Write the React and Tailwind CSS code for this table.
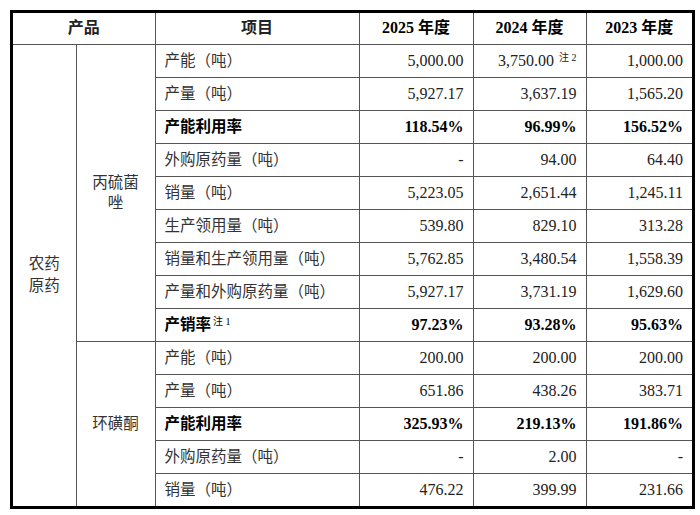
import React from "react";

const font = { fontFamily: '"Liberation Serif", "Noto Sans CJK SC", serif' };

const rowsA = [
  { label: "产能（吨）", v: ["5,000.00", "3,750.00", "1,000.00"], note2: true },
  { label: "产量（吨）", v: ["5,927.17", "3,637.19", "1,565.20"] },
  { label: "产能利用率", v: ["118.54%", "96.99%", "156.52%"], bold: true },
  { label: "外购原药量（吨）", v: ["-", "94.00", "64.40"] },
  { label: "销量（吨）", v: ["5,223.05", "2,651.44", "1,245.11"] },
  { label: "生产领用量（吨）", v: ["539.80", "829.10", "313.28"] },
  { label: "销量和生产领用量（吨）", v: ["5,762.85", "3,480.54", "1,558.39"] },
  { label: "产量和外购原药量（吨）", v: ["5,927.17", "3,731.19", "1,629.60"] },
  { label: "产销率", v: ["97.23%", "93.28%", "95.63%"], bold: true, note1: true },
];

const rowsB = [
  { label: "产能（吨）", v: ["200.00", "200.00", "200.00"] },
  { label: "产量（吨）", v: ["651.86", "438.26", "383.71"] },
  { label: "产能利用率", v: ["325.93%", "219.13%", "191.86%"], bold: true },
  { label: "外购原药量（吨）", v: ["-", "2.00", "-"] },
  { label: "销量（吨）", v: ["476.22", "399.99", "231.66"] },
];

const cell = "border border-[#555] px-[9px]";

function DataCells({ row }) {
  return (
    <>
      <td className={`${cell} text-left text-[15.5px] ${row.bold ? "font-bold text-black" : "text-[#333]"}`}>
        {row.label}
        {row.note1 && <sup className="ml-[2px] text-[10px] font-normal">注 1</sup>}
      </td>
      {row.v.map((val, i) => (
        <td
          key={i}
          className={`${cell} text-right text-[16px] ${row.bold ? "font-bold text-black" : "text-[#222]"}`}
        >
          {val}
          {row.note2 && i === 1 && <sup className="ml-[5px] text-[10px]">注 2</sup>}
        </td>
      ))}
    </>
  );
}

export default function App() {
  return (
    <div className="min-h-[515px] w-[700px] bg-white pl-[10px] pt-[10px]" style={font}>
      <div className="w-[685px] border-[3px] border-black">
        <table className="w-full table-fixed border-collapse border-hidden">
          <colgroup>
            <col className="w-[63px]" />
            <col className="w-[79px]" />
            <col className="w-[204px]" />
            <col className="w-[114px]" />
            <col className="w-[113px]" />
            <col className="w-[106px]" />
          </colgroup>
          <thead>
            <tr className="h-[31px] text-[16px] text-[#222]">
              <th colSpan={2} className={`${cell} font-semibold`}>产品</th>
              <th className={`${cell} font-semibold`}>项目</th>
              <th className={`${cell} font-bold text-black`}>2025 年度</th>
              <th className={`${cell} font-bold text-black`}>2024 年度</th>
              <th className={`${cell} font-bold text-black`}>2023 年度</th>
            </tr>
          </thead>
          <tbody>
            {rowsA.map((row, i) => (
              <tr key={`a${i}`} className="h-[33px]">
                {i === 0 && (
                  <td rowSpan={14} className={`${cell} text-center text-[15.5px] leading-[22px] text-[#333]`}>
                    农药<br />原药
                  </td>
                )}
                {i === 0 && (
                  <td rowSpan={9} className={`${cell} text-center text-[15.5px] leading-[20px] text-[#333]`}>
                    丙硫菌<br />唑
                  </td>
                )}
                <DataCells row={row} />
              </tr>
            ))}
            {rowsB.map((row, i) => (
              <tr key={`b${i}`} className="h-[33px]">
                {i === 0 && (
                  <td rowSpan={5} className={`${cell} text-center text-[15.5px] text-[#333]`}>
                    环磺酮
                  </td>
                )}
                <DataCells row={row} />
              </tr>
            ))}
          </tbody>
        </table>
      </div>
    </div>
  );
}
